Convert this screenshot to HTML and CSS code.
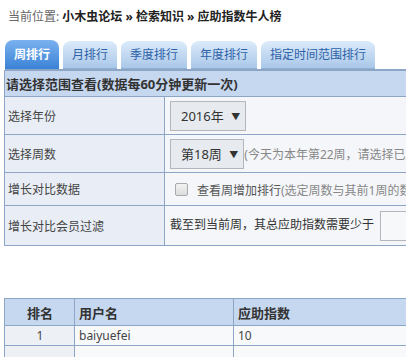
FILE: index.html
```html
<!DOCTYPE html>
<html lang="zh-CN">
<head>
    <meta charset="UTF-8">
    <meta name="viewport" content="width=device-width, initial-scale=1.0">
    <title>应助指数牛人榜</title>
    <link rel="stylesheet" href="styles.css">
</head>
<body>
    <div class="crumb">
        当前位置: <b>小木虫论坛 » 检索知识 » 应助指数牛人榜</b>
    </div>
    <ul class="tabs">
        <li class="tab active">周排行</li>
        <li class="tab">月排行</li>
        <li class="tab">季度排行</li>
        <li class="tab">年度排行</li>
        <li class="tab">指定时间范围排行</li>
    </ul>
    <table class="form-table">
        <tr>
            <th colspan="2">请选择范围查看(数据每60分钟更新一次)</th>
        </tr>
        <tr class="row-tall">
            <td class="label">选择年份</td>
            <td class="field"><span class="select">2016年 <i>▼</i></span></td>
        </tr>
        <tr class="row-tall">
            <td class="label">选择周数</td>
            <td class="field"><span class="select">第18周 <i>▼</i></span><span class="hint">(今天为本年第22周，请选择已过去的周数)</span></td>
        </tr>
        <tr class="row-mid">
            <td class="label">增长对比数据</td>
            <td class="field"><span class="check"></span><span class="check-text">查看周增加排行</span><span class="hint">(选定周数与其前1周的数据对比)</span></td>
        </tr>
        <tr class="row-last">
            <td class="label">增长对比会员过滤</td>
            <td class="field">截至到当前周，其总应助指数需要少于<span class="text-input"></span></td>
        </tr>
    </table>
    <table class="rank-table">
        <tr>
            <th class="col-rank">排名</th>
            <th class="col-user">用户名</th>
            <th>应助指数</th>
        </tr>
        <tr>
            <td class="col-rank">1</td>
            <td>baiyuefei</td>
            <td>10</td>
        </tr>
        <tr>
            <td class="col-rank">&nbsp;</td>
            <td>&nbsp;</td>
            <td>&nbsp;</td>
        </tr>
    </table>
</body>
</html>
```

FILE: styles.css
```css
html {
    overflow: hidden;
}
body {
    margin: 0;
    padding: 9px 0 0 4px;
    font-family: 'Noto Sans', 'Noto Sans CJK SC', sans-serif;
    font-size: 12px;
    color: #333;
    background: #fff;
}
.crumb {
    padding-left: 4px;
    height: 16px;
    line-height: 16px;
    color: #666;
}
.crumb b {
    color: #222;
}
.tabs {
    display: flex;
    gap: 4px;
    list-style: none;
    margin: 15px 0 0 1px;
    padding: 0;
    height: 29px;
    width: 640px;
    border-bottom: 1px solid #8ea6c6;
}
.tab {
    padding: 0 9px;
    height: 28px;
    margin-top: 1px;
    line-height: 28px;
    color: #2d62a8;
    background: linear-gradient(#dcebfa, #a8c6e8);
    border-radius: 8px 8px 0 0;
    box-shadow: inset 0 -1px 0 #8fb0d8;
}
.tab.active {
    height: 29px;
    margin-top: 0;
    line-height: 29px;
    color: #fff;
    font-weight: bold;
    background: linear-gradient(#7ab2ef, #3b82d6);
    box-shadow: none;
}
table {
    border-collapse: collapse;
    width: 640px;
}
td, th {
    border: 1px solid #8ea6c6;
    padding: 0 3px;
    white-space: nowrap;
}
.form-table th {
    height: 25px;
    text-align: left;
    font-size: 13px;
    padding-left: 1px;
    background: #c6d8ef;
    color: #333;
}
.form-table .label {
    width: 153px;
    background: #e9eef6;
    color: #444;
}
.form-table .field {
    padding-left: 5px;
    background: #f4f6f9;
}
.row-tall td {
    height: 37px;
}
.row-mid td {
    height: 32px;
}
.row-last td {
    height: 39px;
}
.select {
    display: inline-block;
    vertical-align: middle;
    height: 28px;
    line-height: 28px;
    padding: 0 5px 0 10px;
    font-size: 13px;
    color: #333;
    background: #e7ebf0;
    border: 1px solid #b3b7bd;
}
.select i {
    font-style: normal;
    font-size: 9px;
    margin-left: 4px;
    vertical-align: 1px;
}
.hint {
    vertical-align: middle;
    color: #888;
}
.check {
    display: inline-block;
    vertical-align: middle;
    width: 11px;
    height: 11px;
    margin: 0 9px 0 5px;
    border: 1px solid #aaa;
    border-radius: 2px;
    background: linear-gradient(#f2f2f2, #dcdcdc);
}
.check-text {
    vertical-align: middle;
    color: #555;
}
.text-input {
    display: inline-block;
    vertical-align: middle;
    width: 120px;
    height: 28px;
    margin-left: 6px;
    border: 1px solid #b3b7bd;
    background: #f7f8fa;
}
.rank-table {
    margin-top: 52px;
}
.rank-table th {
    height: 26px;
    text-align: left;
    font-size: 13px;
    padding-left: 4px;
    background: #c6d8ef;
    color: #333;
}
.rank-table td {
    height: 19px;
    padding-left: 4px;
    background: #f8f9fb;
    color: #444;
}
.rank-table .col-rank {
    width: 62px;
    text-align: center;
    background: #edf0f5;
}
.rank-table th.col-rank {
    text-align: center;
    background: #c6d8ef;
}
.rank-table .col-user {
    width: 151px;
}
```
